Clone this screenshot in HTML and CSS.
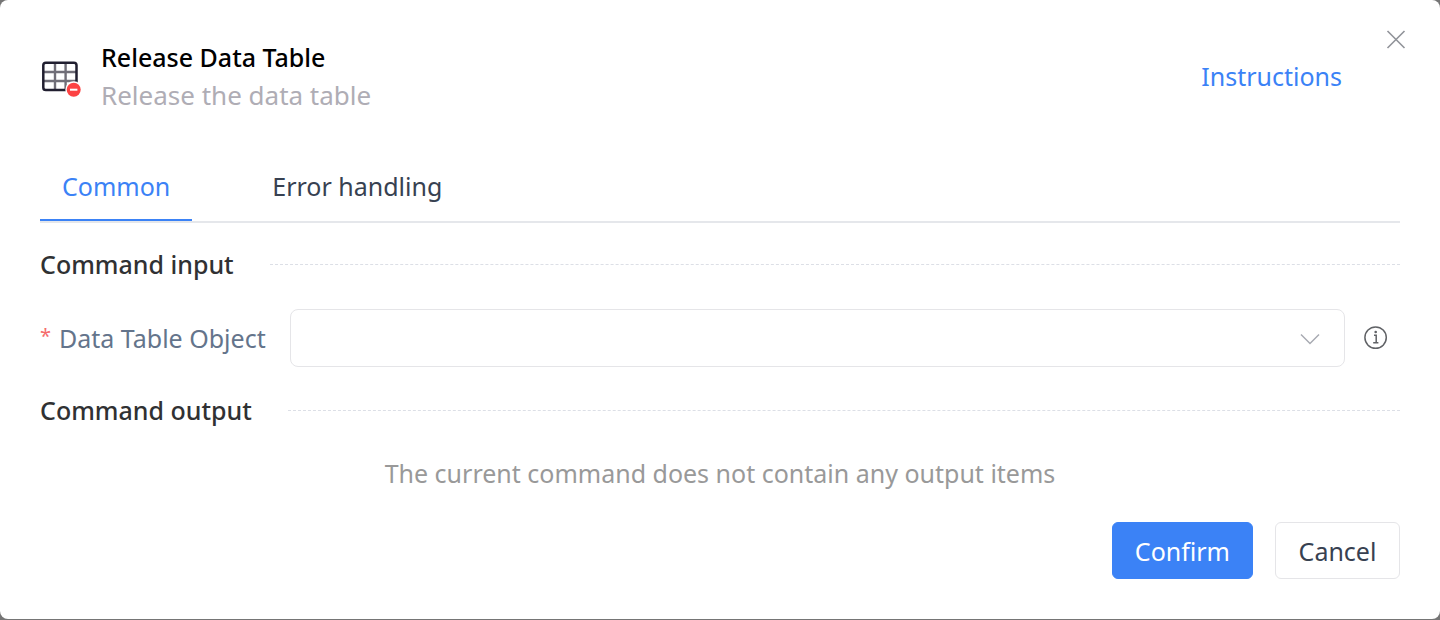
FILE: index.html
```html
<!DOCTYPE html>
<html lang="en">
<head>
<meta charset="utf-8">
<meta name="viewport" content="width=device-width, initial-scale=1">
<title>Release Data Table</title>
<link rel="stylesheet" href="styles.css">
</head>
<body>
<main class="dialog" role="dialog" aria-labelledby="dialog-title">
  <button class="close" type="button" aria-label="Close">
    <svg width="20" height="20" viewBox="0 0 20 20" fill="none" stroke="#909399" stroke-width="1.6"><path d="M1.5 1l17 17M18.5 1l-17 17"/></svg>
  </button>
  <header class="header">
    <svg class="header-icon" width="42" height="42" viewBox="0 0 42 42" fill="none" aria-hidden="true">
      <path d="M4 17h32M4 26h32M15 8v28M25.6 8v28" stroke="#706e78" stroke-width="2.4"/>
      <rect x="3.3" y="7.7" width="33.2" height="27.4" rx="2.6" stroke="#211f30" stroke-width="2.5"/>
      <circle cx="33.7" cy="34.7" r="8.4" fill="#fff"/>
      <circle cx="33.7" cy="34.7" r="7" fill="#fc4243"/>
      <path d="M30 34.7h7.4" stroke="#fff" stroke-width="2"/>
    </svg>
    <div class="heading">
      <h1 class="title" id="dialog-title">Release Data Table</h1>
      <p class="subtitle">Release the data table</p>
    </div>
    <a class="instructions" href="#">Instructions</a>
  </header>
  <div class="tabs" role="tablist">
    <button class="tab tab-active" type="button" role="tab" aria-selected="true">Common</button>
    <button class="tab" type="button" role="tab" aria-selected="false">Error handling</button>
  </div>
  <form class="form">
    <h2 class="section">Command input</h2>
    <div class="field">
      <label class="label" for="table-object"><span class="required">*</span>Data Table Object</label>
      <div class="select-wrap">
        <select class="select" id="table-object"><option value=""></option></select>
        <svg class="arrow" width="20" height="12" viewBox="0 0 20 12" fill="none" stroke="#a8abb2" stroke-width="1.5"><path d="M1 1.5l9 9 9-9"/></svg>
      </div>
      <svg class="info" width="24" height="24" viewBox="0 0 24 24" fill="none" stroke="#606266" stroke-width="1.5" aria-hidden="true">
        <circle cx="11.6" cy="11.6" r="10.7"/>
        <path d="M10 9.3h2.2v7.5M9.2 16.8h5.2"/>
        <circle cx="11.7" cy="6" r="1.3" fill="#606266" stroke="none"/>
      </svg>
    </div>
    <h2 class="section">Command output</h2>
    <p class="empty">The current command does not contain any output items</p>
    <footer class="footer">
      <button class="button button-primary" type="submit">Confirm</button>
      <button class="button" type="button">Cancel</button>
    </footer>
  </form>
</main>
</body>
</html>
```
FILE: styles.css
```css
* { box-sizing: border-box; }
body {
  margin: 0;
  background: #757575;
  font-family: "Noto Sans", "Open Sans", sans-serif;
  font-size: 25px;
  line-height: 38px;
  color: #374151;
}
h1, h2, p { margin: 0; font-size: inherit; }
button, select { font: inherit; color: inherit; }
.dialog {
  position: relative;
  min-height: calc(100vh - 1px);
  padding: 38px 40px 40px;
  border-radius: 8px;
  background: #fff;
}
.close {
  position: absolute;
  top: 30px;
  right: 34px;
  display: flex;
  padding: 0;
  border: 0;
  background: none;
}
.header { display: flex; align-items: center; }
.header-icon { flex: none; margin-right: 19px; overflow: visible; }
.heading { flex: 1; }
.title { font-weight: 500; color: #000; }
.subtitle { font-size: 26px; color: #afadb5; }
.instructions { margin-right: 58px; color: #3b82f6; text-decoration: none; }
.tabs {
  display: flex;
  gap: 58px;
  margin-top: 47px;
  border-bottom: 2px solid #e5e7eb;
}
.tab {
  height: 60px;
  padding: 0 22px 8px;
  border: 0;
  border-bottom: 2px solid transparent;
  background: none;
}
.tab-active { border-color: #3b82f6; color: #3b82f6; }
.section {
  display: flex;
  align-items: center;
  gap: 36px;
  font-weight: 500;
  color: #303133;
}
.section::after { content: ""; flex: 1; border-top: 1px dashed #dcdfe6; }
.form { padding-top: 22px; }
.field { display: flex; align-items: center; margin: 26px 0 24px; }
.label { display: flex; gap: 8px; min-width: 250px; color: #64748b; }
.required { color: #f56c6c; font-size: 20px; line-height: 34px; }
.select-wrap { position: relative; flex: 1; }
.select {
  display: block;
  width: 100%;
  height: 58px;
  padding: 0 56px 0 20px;
  border: 1px solid #e5e5e8;
  border-radius: 8px;
  background: #fff;
  appearance: none;
}
.arrow { position: absolute; top: 24px; right: 25px; pointer-events: none; }
.info { flex: none; margin: 0 12px 0 19px; }
.empty { margin-top: 25px; text-align: center; color: #999; }
.footer { display: flex; justify-content: flex-end; gap: 22px; margin-top: 30px; }
.button {
  min-width: 125px;
  height: 57px;
  padding: 0 22px;
  border: 1px solid #e5e5e8;
  border-radius: 6px;
  background: #fff;
}
.button-primary { border-color: #3b82f6; background: #3b82f6; color: #fff; }
```
